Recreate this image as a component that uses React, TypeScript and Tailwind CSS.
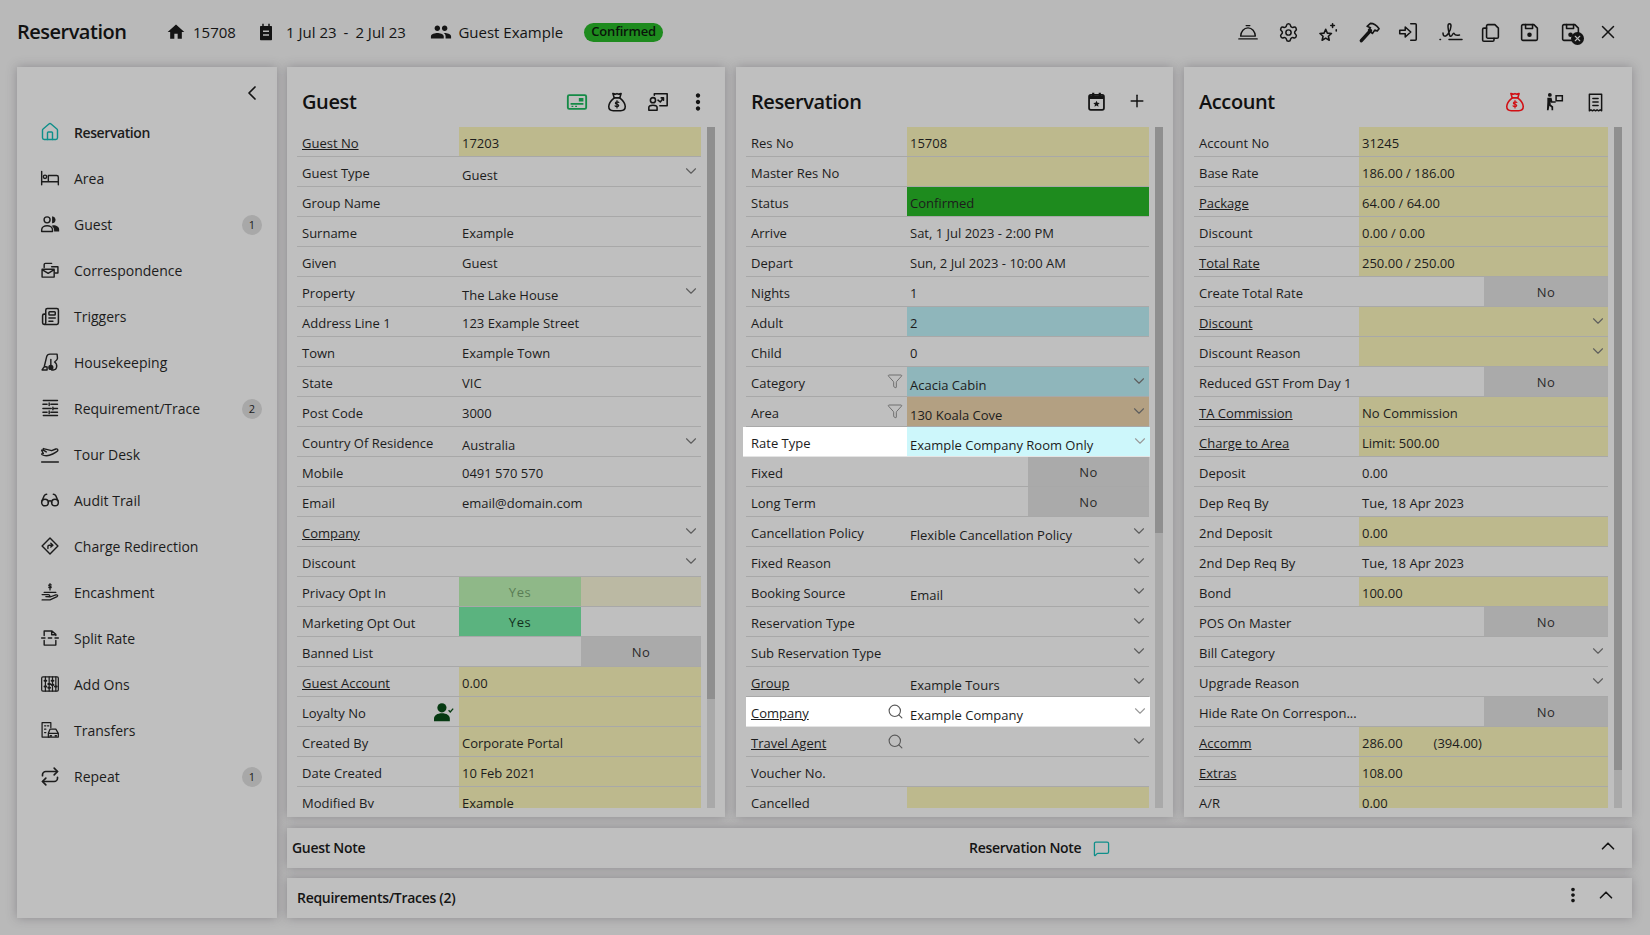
import type { ReactNode } from "react";
import { ChevronDown, ChevronLeft, ChevronUp, Funnel, Glasses, House, MessageSquare, Newspaper, Plus, Repeat, Search, Settings, X } from "lucide-react";
import { MdHome, MdMoreVert, MdPeople } from "react-icons/md";

type Row = {
    label: string;
    value?: string;
    extra?: string;
    link?: boolean;
    select?: boolean;
    bg?: string;
    no?: boolean;
    yes?: "faded" | "solid";
    tool?: "filter" | "search" | "loyalty";
    white?: boolean;
    bleed?: boolean;
};

const khaki = "bg-[#bdb98d]";

const guestRows: Row[] = [
    { label: "Guest No", value: "17203", link: true, bg: khaki },
    { label: "Guest Type", value: "Guest", select: true },
    { label: "Group Name" },
    { label: "Surname", value: "Example" },
    { label: "Given", value: "Guest" },
    { label: "Property", value: "The Lake House", select: true },
    { label: "Address Line 1", value: "123 Example Street" },
    { label: "Town", value: "Example Town" },
    { label: "State", value: "VIC" },
    { label: "Post Code", value: "3000" },
    { label: "Country Of Residence", value: "Australia", select: true },
    { label: "Mobile", value: "0491 570 570" },
    { label: "Email", value: "email@domain.com" },
    { label: "Company", link: true, select: true },
    { label: "Discount", select: true },
    { label: "Privacy Opt In", yes: "faded" },
    { label: "Marketing Opt Out", yes: "solid" },
    { label: "Banned List", no: true },
    { label: "Guest Account", value: "0.00", link: true, bg: khaki },
    { label: "Loyalty No", tool: "loyalty", bg: khaki },
    { label: "Created By", value: "Corporate Portal", bg: khaki },
    { label: "Date Created", value: "10 Feb 2021", bg: khaki },
    { label: "Modified By", value: "Example", bg: khaki },
];

const reservationRows: Row[] = [
    { label: "Res No", value: "15708", bg: khaki },
    { label: "Master Res No", bg: khaki },
    { label: "Status", value: "Confirmed", bg: "bg-[#1e8b1e]" },
    { label: "Arrive", value: "Sat, 1 Jul 2023 - 2:00 PM" },
    { label: "Depart", value: "Sun, 2 Jul 2023 - 10:00 AM" },
    { label: "Nights", value: "1" },
    { label: "Adult", value: "2", bg: "bg-[#8fb6bb]" },
    { label: "Child", value: "0" },
    { label: "Category", value: "Acacia Cabin", select: true, tool: "filter", bg: "bg-[#8fb6bb]" },
    { label: "Area", value: "130 Koala Cove", select: true, tool: "filter", bg: "bg-[#b3a082]" },
    { label: "Rate Type", value: "Example Company Room Only", select: true, bg: "bg-[#cdf7fb]", white: true, bleed: true },
    { label: "Fixed", no: true },
    { label: "Long Term", no: true },
    { label: "Cancellation Policy", value: "Flexible Cancellation Policy", select: true },
    { label: "Fixed Reason", select: true },
    { label: "Booking Source", value: "Email", select: true },
    { label: "Reservation Type", select: true },
    { label: "Sub Reservation Type", select: true },
    { label: "Group", value: "Example Tours", link: true, select: true },
    { label: "Company", value: "Example Company", link: true, select: true, tool: "search", white: true },
    { label: "Travel Agent", link: true, select: true, tool: "search" },
    { label: "Voucher No." },
    { label: "Cancelled", bg: khaki },
];

const accountRows: Row[] = [
    { label: "Account No", value: "31245", bg: khaki },
    { label: "Base Rate", value: "186.00 / 186.00", bg: khaki },
    { label: "Package", value: "64.00 / 64.00", link: true, bg: khaki },
    { label: "Discount", value: "0.00 / 0.00", bg: khaki },
    { label: "Total Rate", value: "250.00 / 250.00", link: true, bg: khaki },
    { label: "Create Total Rate", no: true },
    { label: "Discount", link: true, select: true, bg: khaki },
    { label: "Discount Reason", select: true, bg: khaki },
    { label: "Reduced GST From Day 1", no: true },
    { label: "TA Commission", value: "No Commission", link: true, bg: khaki },
    { label: "Charge to Area", value: "Limit: 500.00", link: true, bg: khaki },
    { label: "Deposit", value: "0.00" },
    { label: "Dep Req By", value: "Tue, 18 Apr 2023" },
    { label: "2nd Deposit", value: "0.00", bg: khaki },
    { label: "2nd Dep Req By", value: "Tue, 18 Apr 2023" },
    { label: "Bond", value: "100.00", bg: khaki },
    { label: "POS On Master", no: true },
    { label: "Bill Category", select: true },
    { label: "Upgrade Reason", select: true },
    { label: "Hide Rate On Correspon...", no: true },
    { label: "Accomm", value: "286.00", extra: "(394.00)", link: true, bg: khaki },
    { label: "Extras", value: "108.00", link: true, bg: khaki },
    { label: "A/R", value: "0.00", bg: khaki },
];

function Ico({ children, className = "h-[22px] w-[22px]", width = 1.7 }: { children: ReactNode; className?: string; width?: number }) {
    return (
        <svg viewBox="0 0 24 24" fill="none" stroke="currentColor" strokeWidth={width} strokeLinecap="round" strokeLinejoin="round" className={className}>
            {children}
        </svg>
    );
}

const MoneyBag = ({ className }: { className?: string }) => (
    <Ico className={className}>
        <path d="M9 7.500 7.500 2.800c2 .9 3 .9 4.500 0 1.500.9 2.500.9 4.500 0L15 7.500" />
        <path d="M9 7.500h6c3 2.500 6 6.500 6 9.500 0 3-2 4.500-5 4.500H8c-3 0-5-1.500-5-4.500 0-3 3-7 6-9.500z" />
        <path d="M14 12.500c-.5-.8-3.500-1-3.800.6-.3 1.800 3.800 1 3.700 2.800-.1 1.500-3.300 1.300-4 .3M12 10.500v8" strokeWidth={1.3} />
    </Ico>
);

// floppy disk with a dot in the middle, used twice in the top bar
const Floppy = () => (
    <Ico className="h-[21px] w-[21px]" width={1.8}>
        <path d="M3 4.500A1.500 1.500 0 0 1 4.500 3H17l4 4v12.500a1.500 1.500 0 0 1-1.500 1.500h-15A1.500 1.500 0 0 1 3 19.500z" />
        <path d="M7.500 3v4.500h8V3" />
        <circle cx="12" cy="14.500" r="1.700" fill="currentColor" />
    </Ico>
);

const sideItems: { label: string; badge?: string; icon: ReactNode }[] = [
    { label: "Reservation", icon: <House className="h-[22px] w-[22px] text-[#0f8f8a]" strokeWidth={1.7} /> },
    {
        label: "Area",
        icon: (
            <Ico>
                <path d="M2 4v16M2 16.500h20M22 20v-9a2 2 0 0 0-2-2H10v7.500" />
                <circle cx="6" cy="10.500" r="2" />
            </Ico>
        ),
    },
    {
        label: "Guest",
        badge: "1",
        icon: (
            <svg viewBox="0 0 24 24" className="h-[22px] w-[22px]">
                <circle cx="8.500" cy="7" r="3.600" fill="none" stroke="currentColor" strokeWidth="1.700" />
                <path d="M15 3.300a3.800 3.800 0 0 1 0 7.500z" fill="currentColor" stroke="currentColor" />
                <path d="M2 21v-2c0-3 3-5 6.500-5s6.500 2 6.500 5v2z" fill="none" stroke="currentColor" strokeWidth="1.700" strokeLinejoin="round" />
                <path d="M16 13.500c4 0 7 2 7 5v2.500h-6c0-3-.5-5-3-6.800z" fill="currentColor" />
            </svg>
        ),
    },
    {
        label: "Correspondence",
        icon: (
            <Ico>
                <path d="M5 9V5.500A1.500 1.500 0 0 1 6.500 4H14M14 8h7.500v7.500H18" />
                <path d="M2.500 11H17v9.500H2.500zM2.500 11.500 9.800 16l7.200-4.500" />
            </Ico>
        ),
    },
    {
        label: "Triggers",
        icon: <Newspaper className="h-[19px] w-[19px]" strokeWidth={1.9} />,
    },
    {
        label: "Housekeeping",
        icon: (
            <Ico>
                <path d="M2.500 21.500h6v-3.500c-2-.7-3-.7-4 .5zM5 18l3-12.500c.5-2 2-3 4-3h8.500l.5 5c0 2-2 3.500-3.500 4.500 1.500 1 3 3 2.500 6-.4 2.200-2 3.500-4 3.500h-2" />
                <circle cx="13" cy="18.500" r="2.300" fill="currentColor" />
                <path d="M13 16V9" />
            </Ico>
        ),
    },
    {
        label: "Requirement/Trace",
        badge: "2",
        icon: (
            <Ico>
                <path d="M4 3h17M4 21h17M3.500 7.500h5M13 7.500h8M3.500 12.500h10M17 12.500h4M3.500 17h5M13 17h8M11 6v3M15.500 11v3M11 15.500v3" />
            </Ico>
        ),
    },
    {
        label: "Tour Desk",
        icon: (
            <Ico>
                <path d="M2 21.500h20M4 5.500l10 2.500 5-2c2-.5 3 1 2 2.500-2 2-9 5.500-13 5.500-3 0-6-1-6-2l2-.5-2-4 1.500-.5 4 2.500" />
            </Ico>
        ),
    },
    { label: "Audit Trail", icon: <Glasses className="h-[22px] w-[22px]" strokeWidth={1.8} /> },
    {
        label: "Charge Redirection",
        icon: (
            <Ico>
                <path d="M12 2.500 21.500 12 12 21.500 2.500 12z" />
                <path d="M9.500 15v-2.500a1.500 1.500 0 0 1 1.500-1.500h4M13 8.700l2.500 2.300-2.500 2.300" />
            </Ico>
        ),
    },
    {
        label: "Encashment",
        icon: (
            <Ico width={1.5}>
                <path d="M2.500 15h7.500c2 0 2.500 2.500.5 2.500H7l5 .5 7-2.500c2-.5 3 1 1.500 2L12 21.500H2.500" />
                <path d="M13.500 3.500c-.5-.6-2.700-.7-3 .5-.2 1.400 3 .8 3 2.200-.1 1.100-2.500 1-3 .3M12 2v7.500M5 12.500h14" />
            </Ico>
        ),
    },
    {
        label: "Split Rate",
        icon: (
            <Ico>
                <path d="M5 9V3.500h9l5 4V9M5 15v5.500h14V15M2 12h4M10 12h4M18 12h4M14 3.500V8h5" />
            </Ico>
        ),
    },
    {
        label: "Add Ons",
        icon: (
            <Ico width={1.5}>
                <rect x="2" y="3.500" width="20" height="17" rx="1.500" />
                <path d="M6.500 3.500v17M11 3.500v17M15 3.500v17M19 3.500v17" />
                <path d="M5.500 8h2M10 12h2M14 8h2M18 15h2M5.500 15h2M10 16.500h2M14 13h2" strokeWidth={2.500} />
            </Ico>
        ),
    },
    {
        label: "Transfers",
        icon: (
            <Ico width={1.5}>
                <path d="M11 20.500H2.500V3H13v6M5.500 7h1.500M9 7h1.500M5.500 11h1.500M5.500 15h1.500" />
                <path d="M10 20.500v-4.500l2-5h7l3 5v4.500zM10 16h12" />
                <path d="M12.500 19h1M18.500 19h1" strokeWidth={2.200} />
            </Ico>
        ),
    },
    { label: "Repeat", badge: "1", icon: <Repeat className="h-[21px] w-[21px]" strokeWidth={2} /> },
];

function RowLine({ row, labelW, toggleW }: { row: Row; labelW: number; toggleW: number }) {
    return (
        <div className={`flex h-[30px] border-b text-[13px] text-[#1c1c1c] ${row.white ? "-mr-[1px] border-[#e4e4e4]" : "border-[#a8a8a8]"} ${row.bleed ? "-ml-[3px]" : ""}`}>
            <div style={{ width: labelW + (row.bleed ? 3 : 0) }} className={`relative flex shrink-0 items-center pt-[4px] ${row.bleed ? "pl-[8px]" : "pl-[5px]"} ${row.white ? "bg-white" : ""}`}>
                <span className={row.link ? "underline" : ""}>{row.label}</span>
                {row.tool === "filter" && <Funnel className="absolute right-[4px] top-[6px] h-[16px] w-[16px] text-[#5a5a5a]" strokeWidth={1.2} />}
                {row.tool === "search" && <Search className="absolute right-[3px] top-[6px] h-[17px] w-[17px] text-[#5a5a5a]" strokeWidth={1.6} />}
                {row.tool === "loyalty" && (
                    <svg viewBox="0 0 24 24" className="absolute right-[4px] top-[5px] h-[20px] w-[22px] text-[#063a12]">
                        <circle cx="9.500" cy="7" r="5.500" fill="currentColor" />
                        <path d="M0 23v-3c0-4 4-6.500 9.500-6.500s9.500 2.500 9.500 6.500v3z" fill="currentColor" />
                        <path d="m17.500 10 2 2 3.500-4" fill="none" stroke="currentColor" strokeWidth="1.600" />
                    </svg>
                )}
            </div>
            {row.no ? (
                <>
                    <div className="flex-1" />
                    <div style={{ width: toggleW }} className="flex shrink-0 items-center justify-center bg-[#aaaaaa] pt-[3px] tracking-[0.5px] text-[#2a2a2a]">
                        No
                    </div>
                </>
            ) : row.yes ? (
                <>
                    <div className={`flex flex-1 items-center justify-center pt-[3px] tracking-[0.5px] ${row.yes === "faded" ? "bg-[#8fb888] text-[#5a7d55]" : "bg-[#5bb37f] text-[#12301c]"}`}>Yes</div>
                    <div style={{ width: toggleW }} className={`shrink-0 ${row.yes === "faded" ? "bg-[#bbb9a3]" : ""}`} />
                </>
            ) : (
                <div className={`relative flex flex-1 items-center pl-[3px] pt-[4px] ${row.bg ?? (row.white ? "bg-white" : "")}`}>
                    <span className={row.select ? "pt-[4px]" : ""}>{row.value}</span>
                    {row.extra && <span className="ml-[31px]">{row.extra}</span>}
                    {row.select && <ChevronDown className={`absolute right-[1px] top-[5px] h-[18px] w-[18px] ${row.white ? "text-[#9a9a9a]" : "text-[#5e5e5e]"}`} strokeWidth={1.5} />}
                </div>
            )}
        </div>
    );
}

function Panel({
    title,
    rows,
    icons,
    thumb,
    labelW,
    toggleW,
    className,
    headPad,
}: {
    title: string;
    rows: Row[];
    icons: ReactNode;
    thumb: number;
    labelW: number;
    toggleW: number;
    className: string;
    headPad: string;
}) {
    return (
        <section className={`flex h-[750px] shrink-0 flex-col bg-[#bfbfbf] shadow-[0_0_10px_rgba(60,55,65,0.35)] ${className}`}>
            <header className={`flex h-[60px] shrink-0 items-center justify-between pl-[15px] pt-[10px] ${headPad}`}>
                <h2 className="text-[20px] font-semibold tracking-[-0.4px] text-[#111111]">{title}</h2>
                <div className="flex items-center">{icons}</div>
            </header>
            <div className="flex h-[681px] overflow-hidden pl-[10px]">
                <div className="flex-1">
                    {rows.map((row) => (
                        <RowLine key={row.label + row.value + row.link} row={row} labelW={labelW} toggleW={toggleW} />
                    ))}
                </div>
                <div className="ml-[6px] mr-[10px] h-full w-[8px] shrink-0 bg-[#a9a9a9]">
                    <div style={{ height: thumb }} className="bg-[#8f8f8f]" />
                </div>
            </div>
        </section>
    );
}

const IconBox = ({ children, w = "w-10", className = "" }: { children: ReactNode; w?: string; className?: string }) => <div className={`flex h-6 items-center justify-center ${w} ${className}`}>{children}</div>;

export default function App() {
    return (
        <div className="flex h-[935px] w-[1650px] flex-col overflow-hidden bg-[#b9b9b9] font-['Open_Sans',sans-serif] text-[#141414]">
            <header className="flex h-[67px] shrink-0 items-center pb-[3px] pl-[17px] pr-[24px]">
                <h1 className="w-[149px] text-[20px] font-semibold tracking-[-0.5px] text-[#111111]">Reservation</h1>
                <MdHome className="mr-[7px] h-[20px] w-[20px]" />
                <span className="w-[64px] text-[15px]">15708</span>
                <svg viewBox="0 0 24 24" className="mr-[11px] h-[18px] w-[18px]">
                    <path fill="currentColor" fillRule="evenodd" d="M7 1h2v3h6V1h2v3h2a1 1 0 0 1 1 1v17a1 1 0 0 1-1 1H5a1 1 0 0 1-1-1V5a1 1 0 0 1 1-1h2zm1 9v2h8v-2zm0 5v2h8v-2z" />
                </svg>
                <span className="text-[15px]">1 Jul 23</span>
                <span className="mx-[7px] text-[15px]">-</span>
                <span className="w-[75px] text-[15px]">2 Jul 23</span>
                <MdPeople className="mr-[6px] h-[22px] w-[22px]" />
                <span className="text-[15px]">Guest Example</span>
                <span className="ml-[21px] flex h-[19px] w-[79px] items-center justify-center rounded-full bg-[#1e8b1e] text-[13px] font-semibold tracking-[-0.2px] text-[#0a140a]">Confirmed</span>
                <div className="ml-auto flex items-center">
                    <IconBox className="translate-x-[2px]">
                        <Ico className="h-[22px] w-[22px]" width={1.5}>
                            <path d="M2 19.500h20M4 16.500c.3-5 3.500-9 8-9s7.700 4 8 9zM10 5h4" />
                        </Ico>
                    </IconBox>
                    <IconBox w="w-[41px]" className="translate-x-[2px]">
                        <Settings className="h-[21px] w-[21px]" strokeWidth={1.7} />
                    </IconBox>
                    <IconBox className="translate-x-[1px]">
                        <Ico>
                            <path d="m9.500 9 1.800 4.200 4.500.4-3.400 3 1 4.400-3.900-2.300L5.600 21l1-4.400-3.400-3 4.500-.4z" />
                            <path d="M17 3v4M15 5h4M21 9.500v1.500" />
                        </Ico>
                    </IconBox>
                    <IconBox w="w-[41px]" className="translate-x-[2px]">
                        <svg viewBox="0 0 24 24" className="h-[23px] w-[23px]">
                            <path d="M3.500 20.500 13 10" fill="none" stroke="currentColor" strokeWidth="3.600" strokeLinecap="round" />
                            <path d="M9.500 5.500 13 2.500c3.500 0 6.500 2 9 5.500l-2 2.500-2.500-1-2.500 3.500-4-3.500L13 7z" fill="none" stroke="currentColor" strokeWidth="1.700" strokeLinejoin="round" />
                        </svg>
                    </IconBox>
                    <IconBox w="w-[39px]">
                        <Ico>
                            <path d="M15 3h5a1 1 0 0 1 1 1v16a1 1 0 0 1-1 1h-5" />
                            <path d="M3 10h6V6.500l6 5.500-6 5.500V14H3z" />
                        </Ico>
                    </IconBox>
                    <IconBox w="w-[44px]" className="translate-x-[2px]">
                        <Ico className="h-[24px] w-[28px]" width={1.5}>
                            <path d="M1 19.500h.5M10 19.500h13M4 13c0 4 3 4 5 1 2-3 3-6 3-8 0-3-3-3-3 0 0 3 1 7 1.500 9 .5 2 2 1.500 3-.5s1.500-1.500 2-.5c.5 1.500 2 1.500 5 1" />
                        </Ico>
                    </IconBox>
                    <IconBox w="w-[39px]">
                        <Ico className="h-[21px] w-[21px]" width={1.8}>
                            <path d="M9 3h8l4 4v10a1.500 1.500 0 0 1-1.500 1.500H9A1.500 1.500 0 0 1 7.500 17V4.500A1.500 1.500 0 0 1 9 3z" />
                            <path d="M7.500 7H4.500A1.500 1.500 0 0 0 3 8.500v12A1.500 1.500 0 0 0 4.500 22h10a1.500 1.500 0 0 0 1.500-1.500v-2" />
                        </Ico>
                    </IconBox>
                    <IconBox w="w-[39px]">
                        <Floppy />
                    </IconBox>
                    <IconBox w="w-[43px]">
                        <span className="relative block h-[21px] w-[21px]">
                            <Floppy />
                            <span className="absolute -bottom-[2px] -right-[3px] flex h-[13px] w-[13px] items-center justify-center rounded-full bg-[#141414]">
                                <X className="h-[9px] w-[9px] text-[#b9b9b9]" strokeWidth={3} />
                            </span>
                        </span>
                    </IconBox>
                    <IconBox w="w-[34px]" className="-translate-x-[1px]">
                        <X className="h-[22px] w-[22px]" strokeWidth={1.6} />
                    </IconBox>
                </div>
            </header>

            <div className="flex gap-[10px] pl-[17px]">
                <aside className="h-[851px] w-[260px] shrink-0 bg-[#bfbfbf] shadow-[0_0_10px_rgba(60,55,65,0.35)]">
                    <div className="flex h-[42px] justify-end pr-[13px] pt-[14px]">
                        <ChevronLeft className="h-6 w-6" strokeWidth={1.7} />
                    </div>
                    {sideItems.map((item, i) => (
                        <div key={item.label} className="flex h-[46px] items-center pl-[23px] pr-[15px] text-[14px] text-[#1c1c1c]">
                            <span className="flex w-[20px] items-center justify-center">{item.icon}</span>
                            <span className={`ml-[14px] ${i === 0 ? "font-semibold tracking-[-0.4px]" : ""}`}>{item.label}</span>
                            {item.badge && <span className="ml-auto mt-[2px] flex h-5 w-5 items-center justify-center rounded-full bg-[#a8a8a8] text-[11px]">{item.badge}</span>}
                        </div>
                    ))}
                </aside>

                <div className="flex w-[1345px] shrink-0 flex-col">
                    <div className="flex gap-[11px]">
                        <Panel
                            title="Guest"
                            rows={guestRows}
                            thumb={572}
                            labelW={162}
                            toggleW={120}
                            className="w-[438px]"
                            headPad="pr-[8px]"
                            icons={
                                <>
                                    <IconBox>
                                        <svg viewBox="0 0 24 24" className="h-[22px] w-[22px] text-[#148a46]">
                                            <rect x="2" y="4.500" width="20" height="15" rx="1.500" fill="none" stroke="currentColor" strokeWidth="2" />
                                            <path fill="currentColor" d="M14 7.500h5v4h-5zM5 13h14v2H5zM6 16h2v1.500H6zM10 16h2v1.500h-2z" />
                                        </svg>
                                    </IconBox>
                                    <IconBox>
                                        <MoneyBag className="h-[22px] w-[22px]" />
                                    </IconBox>
                                    <IconBox w="w-[42px]">
                                        <Ico>
                                            <path d="M8 4.500V3h14v13h-8" />
                                            <circle cx="6.500" cy="10" r="2.800" />
                                            <path d="M2 21v-3c0-1.500 2-2.500 4.500-2.500S11 16.500 11 18v3zM12 10l2.500 2L18 7.500M15.500 7.500H18V10" />
                                        </Ico>
                                    </IconBox>
                                    <IconBox w="w-[38px]">
                                        <MdMoreVert className="h-[26px] w-[26px]" />
                                    </IconBox>
                                </>
                            }
                        />
                        <Panel
                            title="Reservation"
                            rows={reservationRows}
                            thumb={406}
                            labelW={161}
                            toggleW={121}
                            className="w-[437px]"
                            headPad="pr-[16px]"
                            icons={
                                <div className="flex -translate-y-[1px] items-center">
                                    <IconBox w="w-[41px]">
                                        <svg viewBox="0 0 24 24" className="h-[21px] w-[21px]">
                                            <rect x="3.500" y="4.500" width="17" height="17" rx="2" fill="none" stroke="currentColor" strokeWidth="2" />
                                            <path fill="currentColor" d="M3.500 5h17v4h-17zM7 2h2.500v4H7zM14.500 2H17v4h-2.500zM12 11l1.100 2.400 2.600.3-1.900 1.700.5 2.600-2.300-1.300-2.300 1.300.5-2.600-1.900-1.700 2.600-.3z" />
                                        </svg>
                                    </IconBox>
                                    <IconBox>
                                        <Plus className="h-[20px] w-[20px]" strokeWidth={1.8} />
                                    </IconBox>
                                </div>
                            }
                        />
                        <Panel
                            title="Account"
                            rows={accountRows}
                            thumb={643}
                            labelW={165}
                            toggleW={124}
                            className="w-[448px]"
                            headPad="pr-[17px]"
                            icons={
                                <>
                                    <IconBox w="w-[38px]" className="text-[#d10f14]">
                                        <MoneyBag className="h-[22px] w-[22px]" />
                                    </IconBox>
                                    <IconBox w="w-[41px]">
                                        <svg viewBox="0 0 24 24" className="h-[20px] w-[20px] -translate-x-[1px]">
                                            <circle cx="7" cy="3.500" r="2.300" fill="currentColor" />
                                            <path fill="currentColor" d="M4 7h5l1 4h4v2H8.500l-.5-1.500V15l3 2.500V22H9v-3.500L6.500 16.500 5.500 22H3.500L4 12z" />
                                            <rect x="14.500" y="4.500" width="7.500" height="6" fill="none" stroke="currentColor" strokeWidth="1.800" />
                                        </svg>
                                    </IconBox>
                                    <IconBox>
                                        <Ico className="h-[21px] w-[21px]">
                                            <path d="M5 2.500h14V21.500l-1.700-1.200-1.800 1.200-1.700-1.200-1.800 1.200-1.700-1.200-1.800 1.200-1.700-1.200L5 21.500zM9 7.500h6M9 11.500h6M9 15.500h6" />
                                        </Ico>
                                    </IconBox>
                                </>
                            }
                        />
                    </div>

                    <div className="mt-[11px] flex h-[40px] items-center bg-[#bfbfbf] pb-[2px] pl-[5px] text-[14px] font-semibold tracking-[-0.3px] text-[#141414] shadow-[0_0_10px_rgba(60,55,65,0.35)]">
                        <span className="w-[677px]">Guest Note</span>
                        <span>Reservation Note</span>
                        <MessageSquare className="ml-[12px] mt-[2px] h-[17px] w-[17px] text-[#0f8f8a]" strokeWidth={1.8} />
                        <ChevronUp className="ml-auto mr-[13px] h-[22px] w-[22px] -translate-y-[1px]" strokeWidth={1.8} />
                    </div>
                    <div className="mt-[10px] flex h-[40px] items-center bg-[#bfbfbf] pb-[2px] pl-[10px] text-[14px] font-semibold tracking-[-0.3px] text-[#141414] shadow-[0_0_10px_rgba(60,55,65,0.35)]">
                        <span>Requirements/Traces (2)</span>
                        <MdMoreVert className="ml-auto h-[22px] w-[22px] -translate-y-[2px]" />
                        <ChevronUp className="ml-[11px] mr-[15px] h-[22px] w-[22px] -translate-y-[2px]" strokeWidth={1.8} />
                    </div>
                </div>
            </div>
        </div>
    );
}
